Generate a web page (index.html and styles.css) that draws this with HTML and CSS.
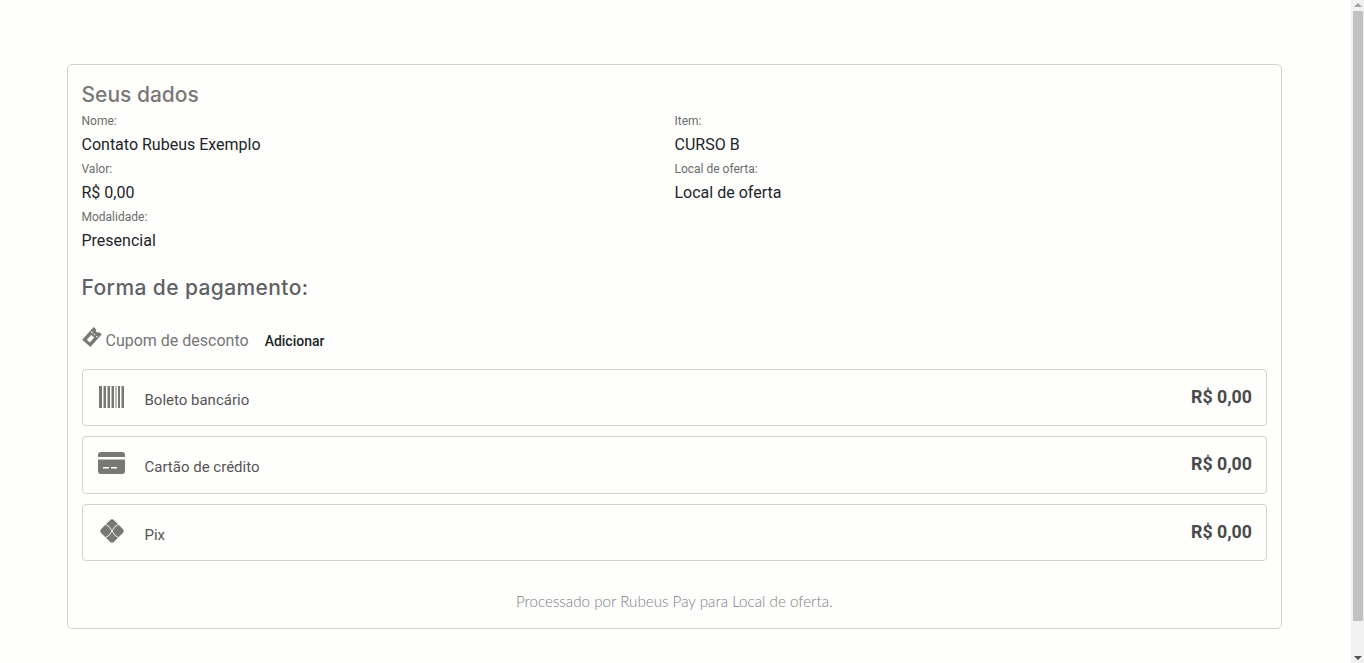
FILE: index.html
```html
<!DOCTYPE html>
<html lang="pt-BR">
<head>
    <meta charset="UTF-8">
    <meta name="viewport" content="width=device-width, initial-scale=1.0">
    <title>Pagamento</title>
    <link rel="stylesheet" href="styles.css">
</head>
<body>
<div class="page">
    <main class="card">
        <h2 class="title">Seus dados</h2>
        <div class="data-grid">
            <div class="data-item">
                <div class="data-label">Nome:</div>
                <div class="data-value">Contato Rubeus Exemplo</div>
            </div>
            <div class="data-item">
                <div class="data-label">Item:</div>
                <div class="data-value">CURSO B</div>
            </div>
            <div class="data-item">
                <div class="data-label">Valor:</div>
                <div class="data-value">R$ 0,00</div>
            </div>
            <div class="data-item">
                <div class="data-label">Local de oferta:</div>
                <div class="data-value">Local de oferta</div>
            </div>
            <div class="data-item">
                <div class="data-label">Modalidade:</div>
                <div class="data-value">Presencial</div>
            </div>
        </div>

        <h2 class="subtitle">Forma de pagamento:</h2>

        <div class="coupon">
            <svg class="coupon-icon" viewBox="0 0 20 20" width="20" height="20">
                <g transform="rotate(-48 10 10)">
                    <path fill="#7a7875" fill-rule="evenodd" d="M1.500 4.500h17v3.700a1.800 1.800 0 0 0 0 3.600v3.700h-17zm3 3.500v4h6.500V8z"/>
                    <path fill="#fefefd" d="M13 5.800h1v1.800h-1zm0 3.300h1v1.800h-1zm0 3.300h1v1.800h-1z"/>
                </g>
            </svg>
            <span class="coupon-text">Cupom de desconto</span>
            <span class="coupon-add">Adicionar</span>
        </div>

        <div class="method">
            <div class="method-icon">
                <svg class="icon-barcode" viewBox="0 0 25 22" width="25" height="22">
                    <path fill="#7a7875" d="M0 0h3v22H0zM4.500 0h2.500v22H4.500zM8.500 0H11v22H8.500zM12.500 0H15v22h-2.500zM16.500 0h1v22h-1zM19 0h2v22h-2zM22.500 0H25v22h-2.500z"/>
                </svg>
            </div>
            <span class="method-name">Boleto bancário</span>
            <span class="method-price">R$ 0,00</span>
        </div>
        <div class="method method-tall">
            <div class="method-icon">
                <svg class="icon-card" viewBox="0 0 27 22" width="27" height="22">
                    <path fill="#7a7875" d="M3 0h21a3 3 0 0 1 3 3v2H0V3a3 3 0 0 1 3-3z"/>
                    <path fill="#7a7875" fill-rule="evenodd" d="M0 7.500h27V19a3 3 0 0 1-3 3H3a3 3 0 0 1-3-3zm5 7.500v1.500h6V15zm8 0v1.500h6V15z"/>
                </svg>
            </div>
            <span class="method-name">Cartão de crédito</span>
            <span class="method-price">R$ 0,00</span>
        </div>
        <div class="method">
            <div class="method-icon">
                <svg class="icon-pix" viewBox="0 0 26 26" width="24" height="24">
                    <path fill="#7a7875" d="M10.500 1.500a3.500 3.500 0 0 1 5 0l9 9a3.500 3.500 0 0 1 0 5l-9 9a3.500 3.500 0 0 1-5 0l-9-9a3.500 3.500 0 0 1 0-5z"/>
                    <path fill="none" stroke="#fefefd" stroke-width="1" d="M5 5q6 3 8 8t8 8M21 5q-6 3-8 8t-8 8"/>
                </svg>
            </div>
            <span class="method-name">Pix</span>
            <span class="method-price">R$ 0,00</span>
        </div>

        <p class="footer-note">Processado por Rubeus Pay para Local de oferta.</p>
    </main>
    <div class="scrollbar">
        <div class="scroll-up"></div>
        <div class="scroll-thumb"></div>
        <div class="scroll-down"></div>
    </div>
</div>
</body>
</html>
```

FILE: styles.css
```css
html, body {
    margin: 0;
    height: 100%;
    overflow: hidden;
    background-color: #fefefd;
}
body {
    font-family: Roboto, "Liberation Sans", sans-serif;
    color: #212529;
}
.page {
    display: flex;
    height: 663px;
}
.card {
    box-sizing: border-box;
    flex: none;
    width: 1215px;
    height: 565px;
    margin: 64px 69px 0 67px;
    padding: 14px 14px 0 13.500px;
    border: 1px solid #d2d2d0;
    border-radius: 5px;
}
.title {
    margin: 0;
    padding-top: 1px;
    height: 29px;
    font-family: Inter, sans-serif;
    font-size: 21px;
    font-weight: 500;
    line-height: 30px;
    color: #7a7875;
}
.data-grid {
    display: grid;
    grid-template-columns: 593px 1fr;
}
.data-label {
    font-size: 12px;
    line-height: 24px;
    color: #6c6c6a;
}
.data-value {
    font-size: 16px;
    line-height: 24px;
    color: #212529;
}
.subtitle {
    margin: 20px 0 0;
    font-family: Inter, sans-serif;
    font-size: 21px;
    font-weight: 500;
    letter-spacing: 0.4px;
    line-height: 30px;
    color: #5f6163;
}
.coupon {
    display: flex;
    align-items: center;
    height: 30px;
    margin-top: 22px;
}
.coupon-icon {
    flex: none;
    margin: -6px 4px 0 0;
}
.coupon-text {
    font-size: 16px;
    color: #757575;
}
.coupon-add {
    margin: 2px 0 0 16px;
    font-size: 14px;
    font-weight: 500;
    color: #212529;
}
.method {
    box-sizing: border-box;
    display: flex;
    align-items: center;
    height: 57px;
    margin-top: 14px;
    padding: 0 14px 2px 15.500px;
    border: 1px solid #d2d2d0;
    border-radius: 4px;
}
.method + .method {
    margin-top: 10px;
}
.method-tall {
    height: 58px;
    padding-bottom: 3px;
}
.method-icon {
    display: flex;
    flex: none;
    width: 46.500px;
}
.icon-barcode {
    margin: 1px 0 0 1px;
}
.icon-card {
    margin-top: -2px;
}
.icon-pix {
    margin: -1px 0 0 2px;
}
.method-name {
    position: relative;
    top: 3px;
    font-size: 15px;
    color: #555;
}
.method-price {
    margin-left: auto;
    font-size: 17.800px;
    font-weight: 700;
    color: #4a4a4a;
}
.footer-note {
    margin: 30px 0 0;
    font-family: Lato, sans-serif;
    font-size: 15.200px;
    font-weight: 300;
    line-height: 20px;
    text-align: center;
    color: #808080;
}
.scrollbar {
    display: flex;
    flex-direction: column;
    flex: none;
    width: 13px;
    background-color: #f1f1f1;
}
.scroll-up, .scroll-down {
    width: 0;
    height: 0;
    margin: 3px auto;
    border-left: 4px solid transparent;
    border-right: 4px solid transparent;
}
.scroll-up {
    border-bottom: 4px solid #a3a3a3;
}
.scroll-down {
    margin-top: auto;
    border-top: 4px solid #505050;
}
.scroll-thumb {
    height: 610px;
    margin: 1px 1px 0 2px;
    background-color: #c1c1c0;
}
```
